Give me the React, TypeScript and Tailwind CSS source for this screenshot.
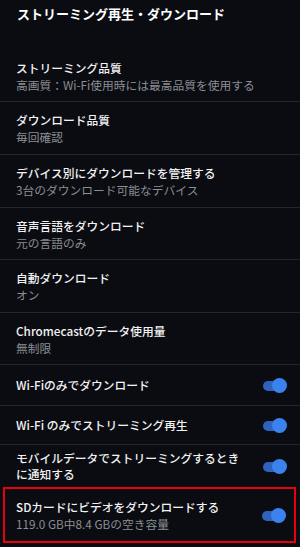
import React from "react";

const font = { fontFamily: '"Noto Sans CJK JP", "Noto Sans", sans-serif' };

function Toggle() {
  return (
    <div className="relative h-[15px] w-[24px] shrink-0">
      <div className="absolute left-0 top-[3px] h-[10px] w-[20px] rounded-full bg-[#2f62bd]" />
      <div className="absolute right-0 top-0 h-[15px] w-[15px] rounded-full bg-[#3b82ee]" />
    </div>
  );
}

function InfoRow({ title, sub, h }: { title: string; sub: string; h: string }) {
  return (
    <div className={`flex flex-col justify-center border-b border-[#22262d] px-4 ${h}`}>
      <div className="text-[11.75px] font-medium leading-[17px] text-[#f2f2f2]">{title}</div>
      <div className="text-[11.75px] leading-[17px] text-[#8b8e93]">{sub}</div>
    </div>
  );
}

function ToggleRow({ title, h }: { title: string; h: string }) {
  return (
    <div className={`flex items-center justify-between border-b border-[#22262d] pl-4 pr-[13px] ${h}`}>
      <div className="text-[11.75px] font-medium leading-[16px] text-[#f2f2f2]">{title}</div>
      <Toggle />
    </div>
  );
}

export default function App() {
  return (
    <div className="h-[547px] w-[300px] overflow-hidden bg-[#0a0c12]" style={font}>
      <div className="h-[50px] pl-[17px] pt-[3px] text-[13px] font-semibold leading-[22px] text-white">
        ストリーミング再生・ダウンロード
      </div>
      <InfoRow h="h-[52px]" title="ストリーミング品質" sub="高画質：Wi-Fi使用時には最高品質を使用する" />
      <InfoRow h="h-[53px]" title="ダウンロード品質" sub="毎回確認" />
      <InfoRow h="h-[53px]" title="デバイス別にダウンロードを管理する" sub="3台のダウンロード可能なデバイス" />
      <InfoRow h="h-[52px]" title="音声言語をダウンロード" sub="元の言語のみ" />
      <InfoRow h="h-[53px]" title="自動ダウンロード" sub="オン" />
      <InfoRow h="h-[52px]" title="Chromecastのデータ使用量" sub="無制限" />
      <ToggleRow h="h-[41px]" title="Wi-Fiのみでダウンロード" />
      <ToggleRow h="h-[39px]" title="Wi-Fi のみでストリーミング再生" />
      <div className="flex h-[42px] items-center justify-between pl-4 pr-[13px]">
        <div className="text-[11.75px] font-medium leading-[16px] text-[#f2f2f2]">
          モバイルデータでストリーミングするとき
          <br />
          に通知する
        </div>
        <Toggle />
      </div>
      <div className="ml-[3px] mr-[4px] flex h-[56px] items-center justify-between border-2 border-[#e8000e] pl-[11px] pr-[8px]">
        <div className="flex flex-col">
          <div className="text-[11.75px] font-medium leading-[17px] text-[#f2f2f2]">SDカードにビデオをダウンロードする</div>
          <div className="text-[11.75px] leading-[17px] text-[#8b8e93]">119.0 GB中8.4 GBの空き容量</div>
        </div>
        <Toggle />
      </div>
    </div>
  );
}
